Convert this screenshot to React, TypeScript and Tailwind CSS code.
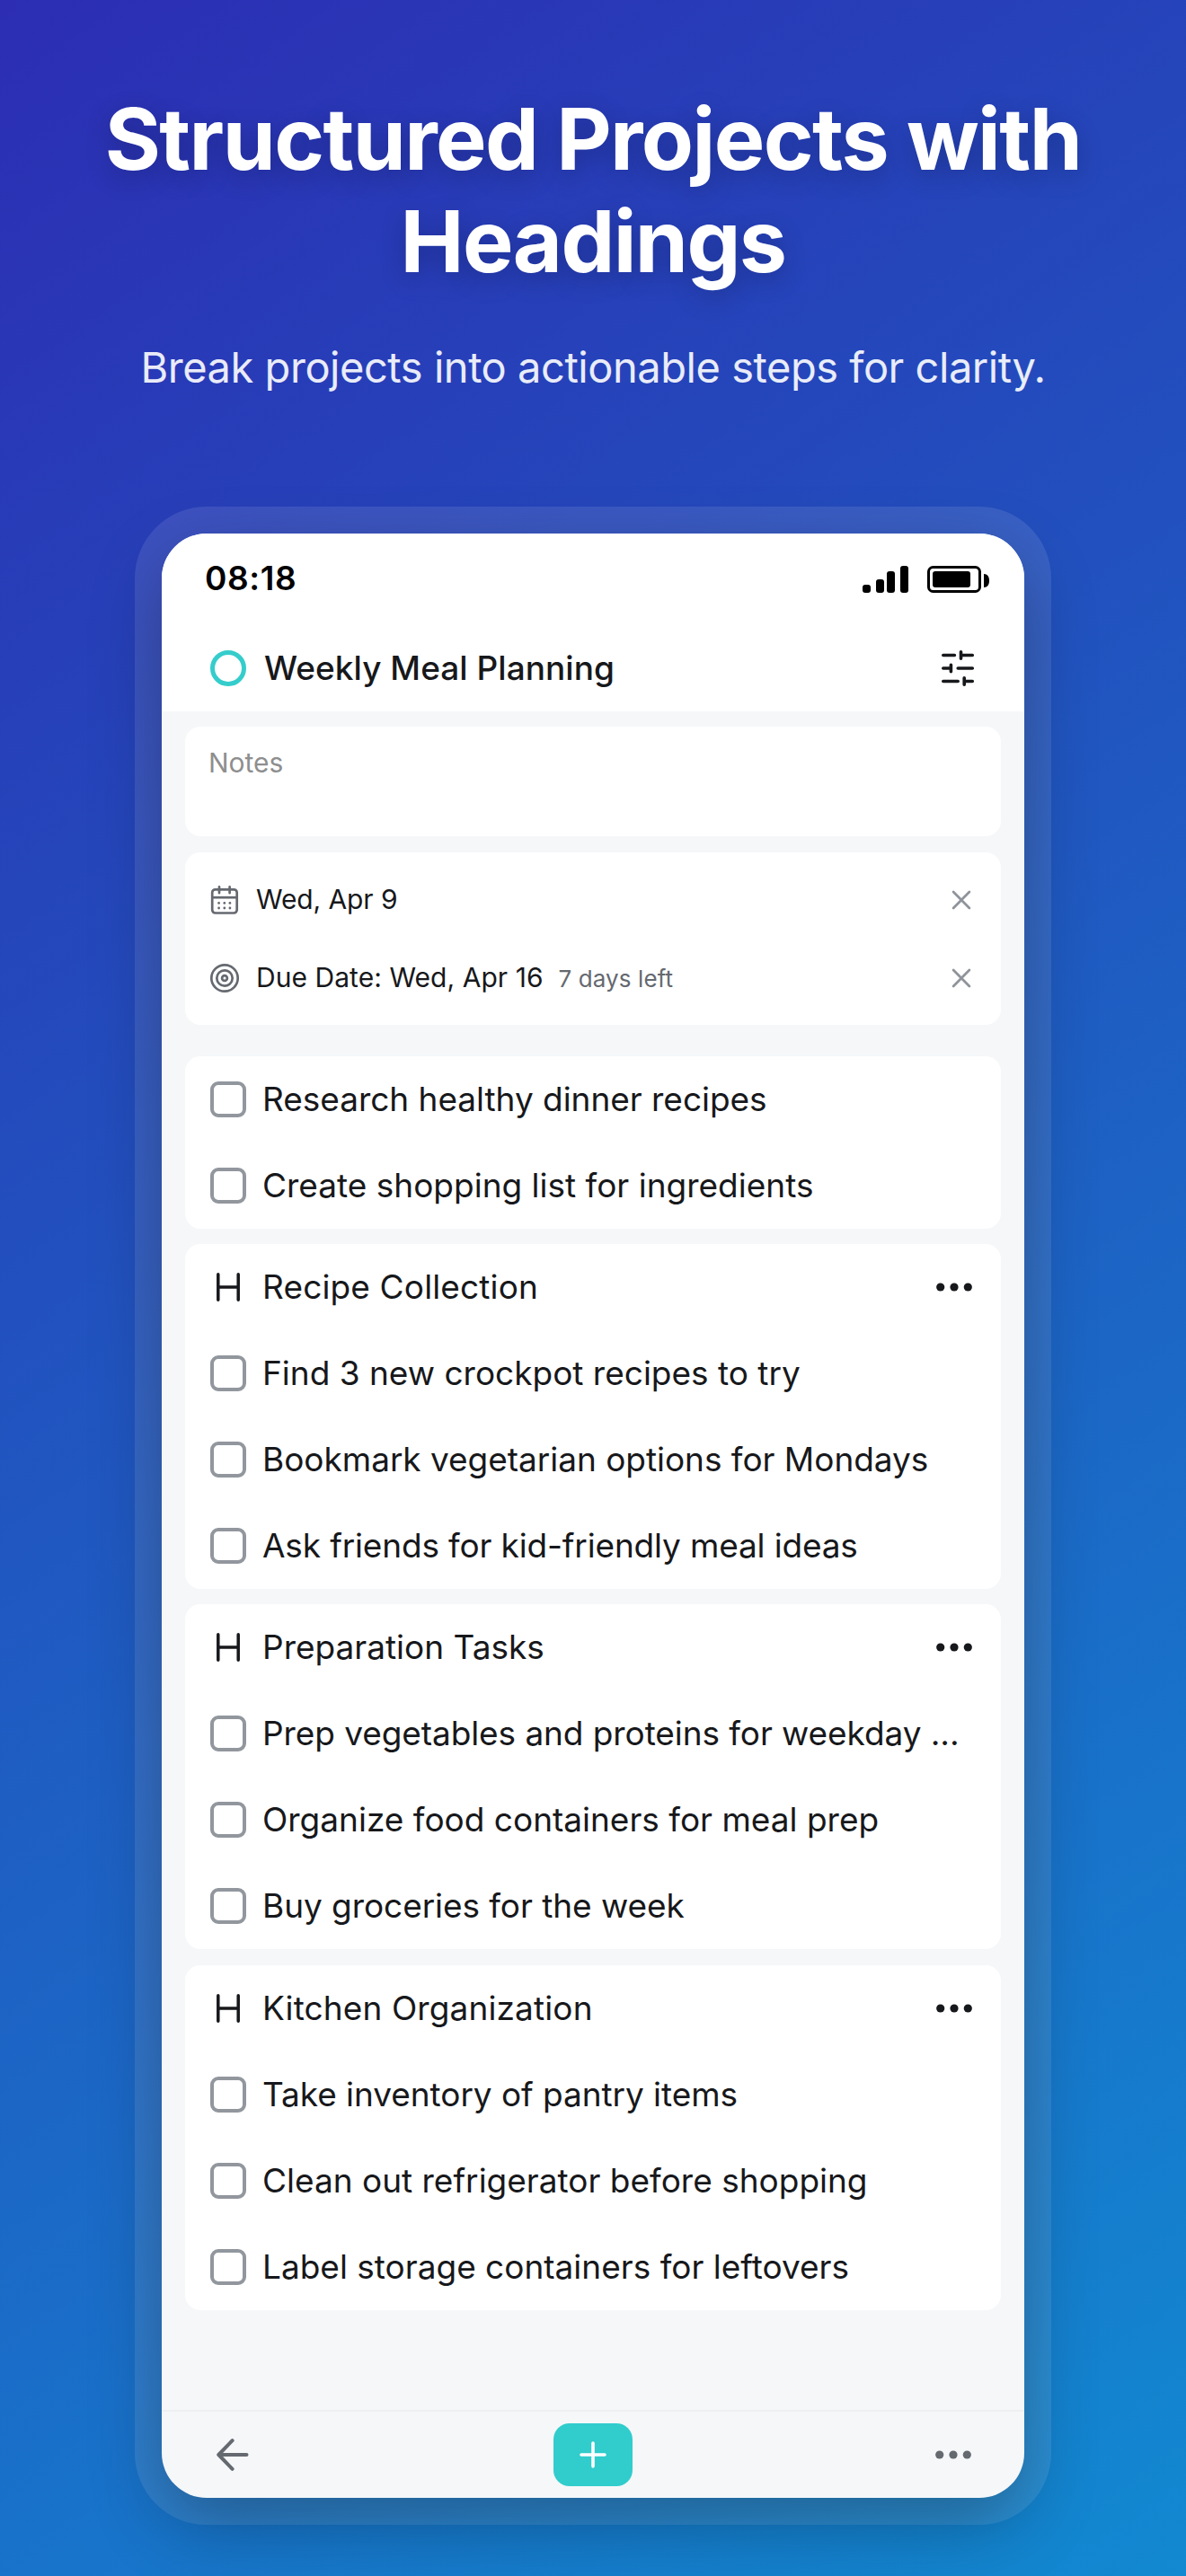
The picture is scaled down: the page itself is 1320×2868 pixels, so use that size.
type Task = { label: string; tracking?: string };
type Section = { heading?: Task; tasks: Task[]; spacing: string };

const sections: Section[] = [
  {
    spacing: "mt-[35px]",
    tasks: [
      { label: "Research healthy dinner recipes", tracking: "tracking-[-0.03px]" },
      { label: "Create shopping list for ingredients" },
    ],
  },
  {
    spacing: "mt-[17px]",
    heading: { label: "Recipe Collection", tracking: "tracking-[0.15px]" },
    tasks: [
      { label: "Find 3 new crockpot recipes to try" },
      { label: "Bookmark vegetarian options for Mondays", tracking: "tracking-[-0.03px]" },
      { label: "Ask friends for kid-friendly meal ideas", tracking: "tracking-[-0.16px]" },
    ],
  },
  {
    spacing: "mt-[17px]",
    heading: { label: "Preparation Tasks" },
    tasks: [
      { label: "Prep vegetables and proteins for weekday ...", tracking: "tracking-[-0.08px]" },
      { label: "Organize food containers for meal prep" },
      { label: "Buy groceries for the week", tracking: "tracking-[-0.06px]" },
    ],
  },
  {
    spacing: "mt-[18px]",
    heading: { label: "Kitchen Organization", tracking: "tracking-[0.12px]" },
    tasks: [
      { label: "Take inventory of pantry items", tracking: "tracking-[-0.06px]" },
      { label: "Clean out refrigerator before shopping" },
      { label: "Label storage containers for leftovers" },
    ],
  },
];

function SignalIcon() {
  return (
    <svg width="51" height="30" viewBox="0 0 51 30" fill="#000">
      <rect x="0" y="21" width="9" height="9" rx="3" />
      <rect x="15" y="15" width="9" height="15" rx="3" />
      <rect x="27" y="6" width="9" height="24" rx="3" />
      <rect x="42" y="0" width="9" height="30" rx="3" />
    </svg>
  );
}

function BatteryIcon() {
  return (
    <svg width="69" height="30" viewBox="0 0 69 30">
      <rect x="1.5" y="1.5" width="57" height="27" rx="5" fill="none" stroke="#000" strokeWidth="3" />
      <rect x="6" y="6" width="42" height="18" rx="3" fill="#000" />
      <path d="M63 9c4 0 6 3 6 7.5S67 24 63 24z" fill="#000" />
    </svg>
  );
}

function TuneIcon() {
  return (
    <svg width="40" height="44" viewBox="0 0 40 44" fill="none" stroke="#17181b" strokeWidth="3.6" strokeLinecap="round">
      <path d="M3.8 7.5H16.4M23.5 7.5H36.3M23.5 3.8V11.2" />
      <path d="M3.8 22H12.4M20.2 22H36.3M12.4 18.3V25.7" />
      <path d="M3.8 36.5H20.2M27.2 36.5H36.3M27.2 32.8V40.2" />
    </svg>
  );
}

function CalendarIcon() {
  return (
    <svg width="34" height="34" viewBox="0 0 34 34" fill="none" stroke="#656970" strokeWidth="2.7">
      <rect x="3.2" y="5.3" width="27.5" height="26.2" rx="3.4" />
      <path d="M3.2 14.2H30.7" />
      <path d="M11 2.4V9.2M22.6 2.4V9.2" strokeLinecap="round" />
      <g fill="#656970" stroke="none">
        <circle cx="10.6" cy="20.4" r="1.4" />
        <circle cx="16.8" cy="20.4" r="1.4" />
        <circle cx="22.9" cy="20.4" r="1.4" />
        <circle cx="10.6" cy="26" r="1.4" />
        <circle cx="16.8" cy="26" r="1.4" />
        <circle cx="22.9" cy="26" r="1.4" />
      </g>
    </svg>
  );
}

function TargetIcon() {
  return (
    <svg width="34" height="34" viewBox="0 0 34 34" fill="none" stroke="#656970" strokeWidth="2.7">
      <circle cx="17" cy="17" r="14.7" />
      <circle cx="17" cy="17" r="8.7" />
      <circle cx="17" cy="17" r="2.9" />
    </svg>
  );
}

function CloseIcon() {
  return (
    <svg width="24" height="24" viewBox="0 0 24 24" fill="none" stroke="#8f949b" strokeWidth="2.8" strokeLinecap="round">
      <path d="M3.1 3.1 20.9 20.9M20.9 3.1 3.1 20.9" />
    </svg>
  );
}

function DotsIcon({ color }: { color: string }) {
  return (
    <svg width="40" height="10" viewBox="0 0 40 10" fill={color}>
      <circle cx="4.7" cy="5" r="4.6" />
      <circle cx="20" cy="5" r="4.6" />
      <circle cx="35.3" cy="5" r="4.6" />
    </svg>
  );
}

function HeadingIcon() {
  return (
    <svg width="40" height="40" viewBox="0 0 40 40" fill="none" stroke="#17181b" strokeWidth="3.5" strokeLinecap="round">
      <path d="M8.8 5.8V34.2M31.2 5.8V34.2M8.8 20H31.2" />
    </svg>
  );
}

function Label({ label, tracking = "tracking-normal" }: Task) {
  return <span className={`ml-[18px] flex-1 whitespace-nowrap text-[37px] leading-[46px] ${tracking}`}>{label}</span>;
}

function SectionCard({ section }: { section: Section }) {
  return (
    <section className={`rounded-[17px] bg-white pl-7 pr-8 ${section.spacing}`}>
      {section.heading && (
        <div className="flex h-24 items-center">
          <HeadingIcon />
          <Label {...section.heading} />
          <DotsIcon color="#17181b" />
        </div>
      )}
      {section.tasks.map((task) => (
        <div key={task.label} className="flex h-24 items-center">
          <span className="size-10 shrink-0 rounded-[9px] border-[4px] border-[#92979e]" />
          <Label {...task} />
        </div>
      ))}
    </section>
  );
}

export default function App() {
  return (
    <div
      className="flex h-[2868px] w-[1320px] flex-col items-center overflow-hidden bg-[linear-gradient(145deg,#2c2db3_0%,#1289d1_100%)] text-[#17181b]"
      style={{ fontFamily: 'Inter, "Liberation Sans", sans-serif' }}
    >
      <header className="flex flex-col items-center pt-[98px] text-center text-white">
        <h1 className="w-[1200px] text-[95px] font-bold leading-[114px] tracking-[-1.6px] [text-shadow:0_8px_28px_rgba(0,0,0,0.22)]">
          Structured Projects with Headings
        </h1>
        <p className="mt-[53px] text-[47px] leading-[60px] tracking-[-0.46px] text-white/90">
          Break projects into actionable steps for clarity.
        </p>
      </header>

      <main className="mt-[125px] w-[1020px] rounded-[80px] bg-white/10 p-[30px]">
        <div className="flex h-[2187px] flex-col rounded-[50px] bg-[#f5f7f9] shadow-[0_30px_80px_rgba(0,0,0,0.3)]">
          <div className="rounded-t-[50px] bg-white">
            <div className="flex h-[102px] items-center pl-12 pr-[39px]">
              <span className="flex-1 pb-[2px] text-[37px] font-semibold leading-[46px] tracking-[0.6px] text-black">08:18</span>
              <SignalIcon />
              <span className="ml-[21px]">
                <BatteryIcon />
              </span>
            </div>
            <div className="flex h-24 items-center pl-[54px] pr-[54px]">
              <span className="size-10 rounded-full border-[5px] border-[#35cdcc]" />
              <h2 className="ml-5 flex-1 pb-px text-[37px] font-medium leading-[46px] tracking-[0.03px]">Weekly Meal Planning</h2>
              <TuneIcon />
            </div>
          </div>

          <div className="flex-1 px-[26px] pt-[17px]">
            <div className="h-[122px] rounded-[17px] bg-white px-[26px] pt-[22px] text-[30px] leading-9 text-[#8e8e8e]">Notes</div>

            <div className="mt-[18px] h-48 rounded-[17px] bg-white px-[27px] py-[9px]">
              <div className="flex h-[87px] items-center pr-[5px]">
                <CalendarIcon />
                <span className="ml-[18px] flex-1 pb-px text-[30px] leading-9 tracking-[-0.1px]">Wed, Apr 9</span>
                <CloseIcon />
              </div>
              <div className="flex h-[87px] items-center pr-[5px]">
                <TargetIcon />
                <div className="ml-[18px] flex flex-1 items-baseline">
                  <span className="text-[30px] leading-9 tracking-[0.05px]">Due Date: Wed, Apr 16</span>
                  <span className="ml-[17px] text-[26px] leading-9 tracking-[0.1px] text-[#656970]">7 days left</span>
                </div>
                <CloseIcon />
              </div>
            </div>

            {sections.map((section) => (
              <SectionCard key={section.tasks[0].label} section={section} />
            ))}
          </div>

          <footer className="grid h-[98px] grid-cols-3 items-center border-t-2 border-[#eff0f2] pl-[60px] pr-[59px]">
            <svg width="38" height="40" viewBox="0 0 38 40" fill="none" stroke="#656970" strokeWidth="4" strokeLinecap="round" strokeLinejoin="round">
              <path d="M34.5 20H3.3M18.6 4.2 3.3 20 18.6 35.8" />
            </svg>
            <button className="flex h-[70px] w-[88px] items-center justify-center justify-self-center rounded-[18px] bg-[#31cccc]">
              <svg width="32" height="32" viewBox="0 0 32 32" fill="none" stroke="#fff" strokeWidth="3.6" strokeLinecap="round">
                <path d="M16 3V29M3 16H29" />
              </svg>
            </button>
            <span className="justify-self-end">
              <DotsIcon color="#656970" />
            </span>
          </footer>
        </div>
      </main>
    </div>
  );
}
